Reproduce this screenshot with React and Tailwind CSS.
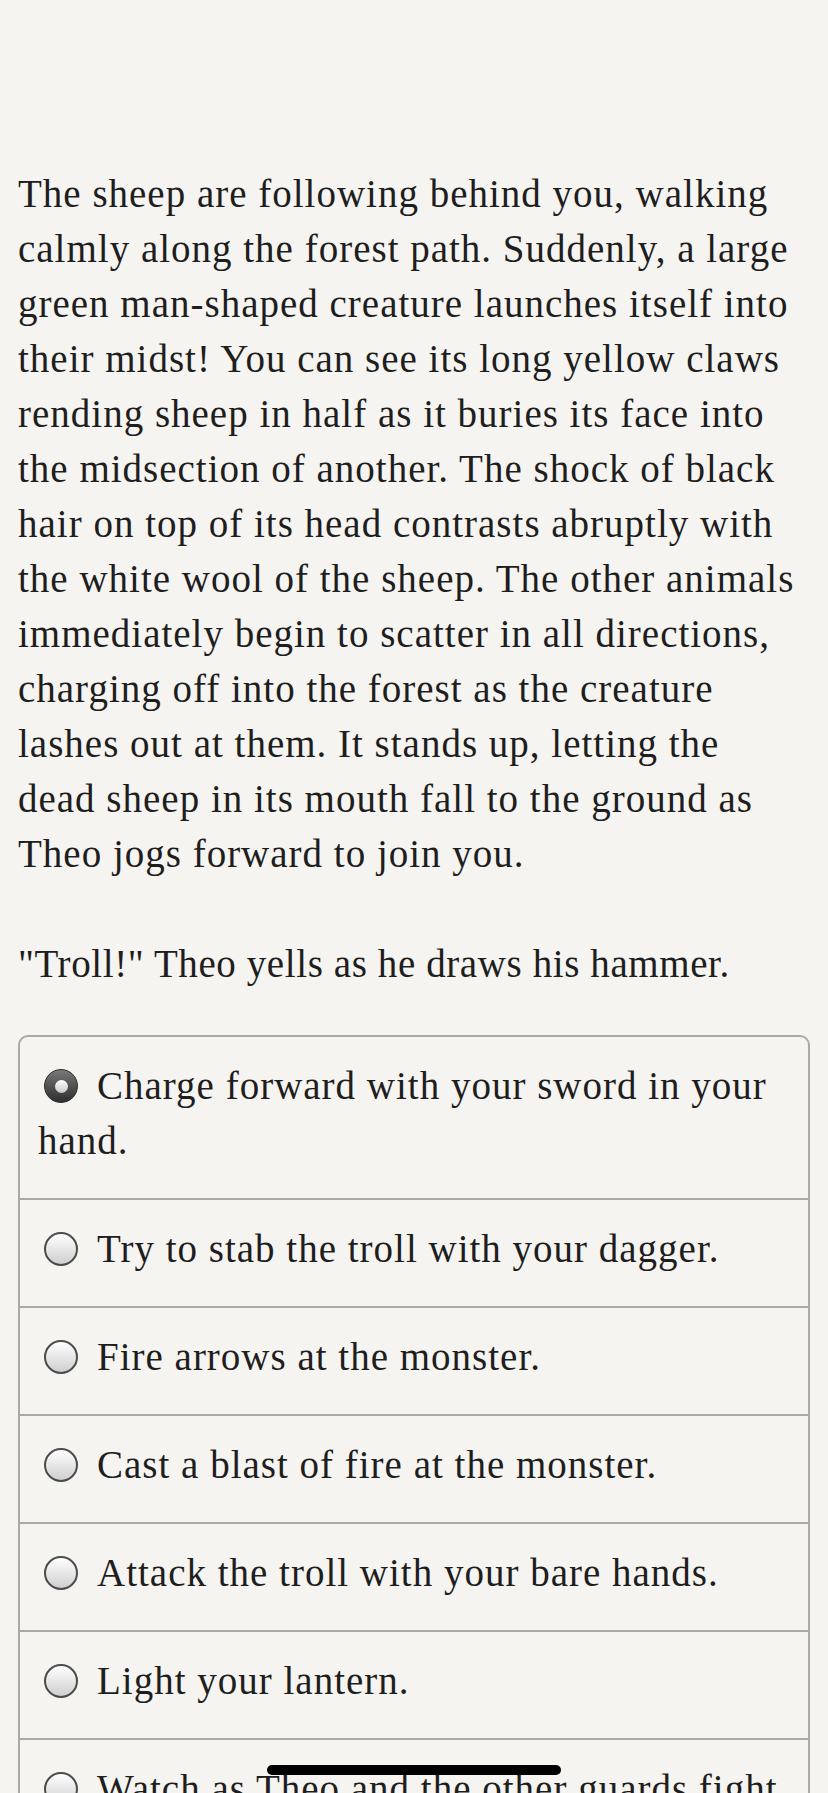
import React from 'react';

const storyLines = [
  'The sheep are following behind you, walking',
  'calmly along the forest path. Suddenly, a large',
  'green man-shaped creature launches itself into',
  'their midst! You can see its long yellow claws',
  'rending sheep in half as it buries its face into',
  'the midsection of another. The shock of black',
  'hair on top of its head contrasts abruptly with',
  'the white wool of the sheep. The other animals',
  'immediately begin to scatter in all directions,',
  'charging off into the forest as the creature',
  'lashes out at them. It stands up, letting the',
  'dead sheep in its mouth fall to the ground as',
  'Theo jogs forward to join you.',
];

const choices = [
  ['Charge forward with your sword in your', 'hand.'],
  ['Try to stab the troll with your dagger.'],
  ['Fire arrows at the monster.'],
  ['Cast a blast of fire at the monster.'],
  ['Attack the troll with your bare hands.'],
  ['Light your lantern.'],
  ['Watch as Theo and the other guards fight'],
];

function Radio({ checked }) {
  if (checked) {
    return (
      <span className="inline-block align-[-4px] w-[34px] h-[34px] ml-[6px] mr-[19px] rounded-full border border-[#2e2e2e] bg-linear-to-b from-[#7a7a7a] to-[#2f2f2f]">
        <span className="block mx-auto mt-[9.5px] w-[13px] h-[13px] rounded-full bg-linear-to-b from-white to-[#c9c9c9]" />
      </span>
    );
  }
  return (
    <span className="inline-block align-[-4px] w-[34px] h-[34px] ml-[6px] mr-[19px] rounded-full border-2 border-[#4b4b4b] bg-linear-to-b from-white to-[#cfcfcf]" />
  );
}

export default function App() {
  return (
    <div
      className="min-h-screen bg-[#f6f4f1] text-[#1e1e1e] px-[18px] pt-[166px] pb-10 tracking-[1px]"
      style={{ fontFamily: '"Liberation Serif", "Times New Roman", serif' }}
    >
      <p className="text-[39px] leading-[55px] whitespace-nowrap">
        {storyLines.map((line, i) => (
          <span key={i} className="block">{line}</span>
        ))}
      </p>

      <p className="mt-[55px] text-[39px] leading-[55px] tracking-[0.6px]">
        "Troll!" Theo yells as he draws his hammer.
      </p>

      <div className="mt-[44px] border-2 border-[#a9a9a9] rounded-[10px] overflow-hidden">
        {choices.map((lines, i) => (
          <div
            key={i}
            className={
              'px-[18px] pt-[21px] pb-[30px] text-[39px] leading-[55px] whitespace-nowrap ' +
              (i > 0 ? 'border-t-2 border-[#a9a9a9]' : '')
            }
          >
            <Radio checked={i === 0} />
            {lines[0]}
            {lines.slice(1).map((l, j) => (
              <span key={j} className="block">{l}</span>
            ))}
          </div>
        ))}
      </div>

      <div className="fixed left-[267px] bottom-[18px] w-[294px] h-[10px] rounded-full bg-black" />
    </div>
  );
}
